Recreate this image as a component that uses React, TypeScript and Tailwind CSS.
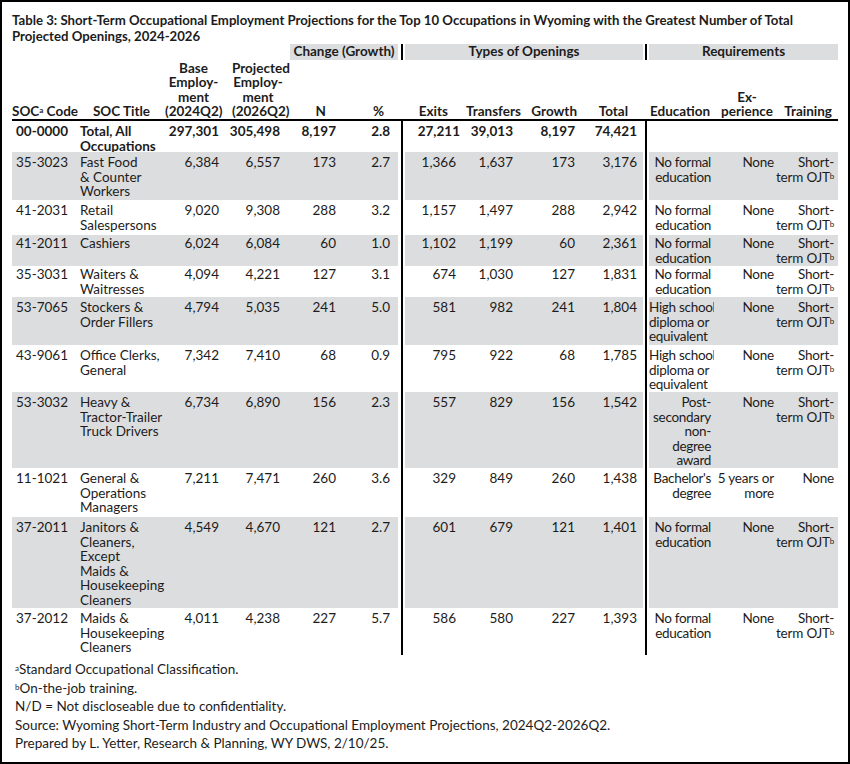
const GRID =
  "grid grid-cols-[66px_87px_57px_62px_56px_58px_7px_55px_57px_62px_64px_6px_65px_62px_62px]";

interface Row {
  code: string;
  title: string[];
  base: string;
  proj: string;
  n: string;
  pct: string;
  exits: string;
  transfers: string;
  growth: string;
  total: string;
  edu: string[];
  eduLeft?: boolean;
  exp: string[];
  ojt: boolean;
  h: string;
  pt?: string;
  gray: boolean;
}

const ROWS: Row[] = [
  {
    code: "35-3023",
    title: ["Fast Food", "& Counter", "Workers"],
    base: "6,384",
    proj: "6,557",
    n: "173",
    pct: "2.7",
    exits: "1,366",
    transfers: "1,637",
    growth: "173",
    total: "3,176",
    edu: ["No formal", "education"],
    exp: ["None"],
    ojt: true,
    h: "h-[48px]",
    gray: true,
  },
  {
    code: "41-2031",
    title: ["Retail", "Salespersons"],
    base: "9,020",
    proj: "9,308",
    n: "288",
    pct: "3.2",
    exits: "1,157",
    transfers: "1,497",
    growth: "288",
    total: "2,942",
    edu: ["No formal", "education"],
    exp: ["None"],
    ojt: true,
    h: "h-[35px]",
    gray: false,
  },
  {
    code: "41-2011",
    title: ["Cashiers"],
    base: "6,024",
    proj: "6,084",
    n: "60",
    pct: "1.0",
    exits: "1,102",
    transfers: "1,199",
    growth: "60",
    total: "2,361",
    edu: ["No formal", "education"],
    exp: ["None"],
    ojt: true,
    h: "h-[31px]",
    pt: "pt-[1px]",
    gray: true,
  },
  {
    code: "35-3031",
    title: ["Waiters &", "Waitresses"],
    base: "4,094",
    proj: "4,221",
    n: "127",
    pct: "3.1",
    exits: "674",
    transfers: "1,030",
    growth: "127",
    total: "1,831",
    edu: ["No formal", "education"],
    exp: ["None"],
    ojt: true,
    h: "h-[31px]",
    pt: "pt-[1px]",
    gray: false,
  },
  {
    code: "53-7065",
    title: ["Stockers &", "Order Fillers"],
    base: "4,794",
    proj: "5,035",
    n: "241",
    pct: "5.0",
    exits: "581",
    transfers: "982",
    growth: "241",
    total: "1,804",
    edu: ["High school", "diploma or", "equivalent"],
    eduLeft: true,
    exp: ["None"],
    ojt: true,
    h: "h-[48px]",
    gray: true,
  },
  {
    code: "43-9061",
    title: ["Office Clerks,", "General"],
    base: "7,342",
    proj: "7,410",
    n: "68",
    pct: "0.9",
    exits: "795",
    transfers: "922",
    growth: "68",
    total: "1,785",
    edu: ["High school", "diploma or", "equivalent"],
    eduLeft: true,
    exp: ["None"],
    ojt: true,
    h: "h-[47px]",
    gray: false,
  },
  {
    code: "53-3032",
    title: ["Heavy &", "Tractor-Trailer", "Truck Drivers"],
    base: "6,734",
    proj: "6,890",
    n: "156",
    pct: "2.3",
    exits: "557",
    transfers: "829",
    growth: "156",
    total: "1,542",
    edu: ["Post-", "secondary", "non-", "degree", "award"],
    exp: ["None"],
    ojt: true,
    h: "h-[76px]",
    gray: true,
  },
  {
    code: "11-1021",
    title: ["General &", "Operations", "Managers"],
    base: "7,211",
    proj: "7,471",
    n: "260",
    pct: "3.6",
    exits: "329",
    transfers: "849",
    growth: "260",
    total: "1,438",
    edu: ["Bachelor's", "degree"],
    exp: ["5 years or", "more"],
    ojt: false,
    h: "h-[49px]",
    gray: false,
  },
  {
    code: "37-2011",
    title: ["Janitors &", "Cleaners,", "Except", "Maids &", "Housekeeping", "Cleaners"],
    base: "4,549",
    proj: "4,670",
    n: "121",
    pct: "2.7",
    exits: "601",
    transfers: "679",
    growth: "121",
    total: "1,401",
    edu: ["No formal", "education"],
    exp: ["None"],
    ojt: true,
    h: "h-[91px]",
    gray: true,
  },
  {
    code: "37-2012",
    title: ["Maids &", "Housekeeping", "Cleaners"],
    base: "4,011",
    proj: "4,238",
    n: "227",
    pct: "5.7",
    exits: "586",
    transfers: "580",
    growth: "227",
    total: "1,393",
    edu: ["No formal", "education"],
    exp: ["None"],
    ojt: true,
    h: "h-[47px]",
    gray: false,
  },
];

function Sep() {
  return (
    <div className="flex justify-center">
      <div className="w-[2px] bg-black" />
    </div>
  );
}

function Lines({ lines }: { lines: string[] }) {
  return (
    <>
      {lines.map((line) => (
        <div key={line}>{line}</div>
      ))}
    </>
  );
}

function DataRow({ row }: { row: Row }) {
  const bg = row.gray ? "bg-[#dcdddf]" : "bg-white";
  const cell = `${bg} ${row.pt ?? "pt-[3px]"}`;
  return (
    <div className={`${GRID} ${row.h}`}>
      <div className={`${cell} pl-[4px]`}>{row.code}</div>
      <div className={`${cell} pl-[2px] whitespace-nowrap`}>
        <Lines lines={row.title} />
      </div>
      <div className={`${cell} pr-[3px] text-right`}>{row.base}</div>
      <div className={`${cell} pr-[4px] text-right`}>{row.proj}</div>
      <div className={`${cell} pr-[4px] text-right`}>{row.n}</div>
      <div className={`${cell} pr-[8px] text-right`}>{row.pct}</div>
      <Sep />
      <div className={`${cell} pr-[4px] text-right`}>{row.exits}</div>
      <div className={`${cell} pr-[4px] text-right`}>{row.transfers}</div>
      <div className={`${cell} pr-[4px] text-right`}>{row.growth}</div>
      <div className={`${cell} pr-[6px] text-right`}>{row.total}</div>
      <Sep />
      <div
        className={`${cell} whitespace-nowrap tracking-[-0.3px] ${row.eduLeft ? "text-left" : "pr-[3px] text-right"}`}
      >
        <Lines lines={row.edu} />
      </div>
      <div className={`${cell} pr-[2px] text-right whitespace-nowrap tracking-[-0.2px]`}>
        <Lines lines={row.exp} />
      </div>
      <div className={`${cell} pr-[4px] text-right whitespace-nowrap tracking-[-0.2px]`}>
        {row.ojt ? (
          <>
            <div>Short-</div>
            <div>
              term OJT<sup className="top-[-3px] text-[8px]">b</sup>
            </div>
          </>
        ) : (
          <div>None</div>
        )}
      </div>
    </div>
  );
}

export default function App() {
  return (
    <div className="h-[764px] w-[850px] border-2 border-black bg-white pl-[10px] pt-[10px] font-['Lato','Liberation_Sans',sans-serif] text-[13.5px] leading-[14.6px] text-[#1c1c1c]">
      <h1 className="whitespace-nowrap text-[13.2px] font-bold leading-[16px]">
        Table 3: Short-Term Occupational Employment Projections for the Top 10 Occupations in Wyoming with the Greatest Number of Total
        <br />
        Projected Openings, 2024-2026
      </h1>

      <div className="w-[826px]">
        <div className={`${GRID} h-[16px] font-bold leading-[15px]`}>
          <div className="col-span-4" />
          <div className="col-span-2 ml-[6px] bg-[#dcdddf] text-center">Change (Growth)</div>
          <Sep />
          <div className="col-span-4 bg-[#dcdddf] text-center">Types of Openings</div>
          <Sep />
          <div className="col-span-3 bg-[#dcdddf] text-center">Requirements</div>
        </div>

        <div className={`${GRID} h-[59px] items-end font-bold`}>
          <div className="whitespace-nowrap">
            SOC<sup className="top-[-3px] text-[8px]">a</sup> Code
          </div>
          <div className="text-center">SOC Title</div>
          <div className="whitespace-nowrap text-center">
            <div>Base</div>
            <div>Employ-</div>
            <div>ment</div>
            <div>(2024Q2)</div>
          </div>
          <div className="whitespace-nowrap pl-[10px] text-center">
            <div>Projected</div>
            <div>Employ-</div>
            <div>ment</div>
            <div>(2026Q2)</div>
          </div>
          <div className="pr-[14px] text-right">N</div>
          <div className="pr-[14px] text-right">%</div>
          <Sep />
          <div className="pr-[12px] text-right">Exits</div>
          <div className="whitespace-nowrap pl-[6px] text-left">Transfers</div>
          <div className="pr-[2px] text-right">Growth</div>
          <div className="pr-[15px] text-right">Total</div>
          <Sep />
          <div className="whitespace-nowrap pl-[1px]">Education</div>
          <div className="whitespace-nowrap pl-[4px] text-center">
            <div>Ex-</div>
            <div>perience</div>
          </div>
          <div className="pr-[6px] text-right">Training</div>
        </div>

        <div className="h-[2px] bg-black" />

        <div className={`${GRID} h-[31px] font-bold`}>
          <div className="pl-[4px] pt-[3px]">00-0000</div>
          <div className="pl-[2px] pt-[3px]">
            <div>Total, All</div>
            <div>Occupations</div>
          </div>
          <div className="pr-[3px] pt-[3px] text-right">297,301</div>
          <div className="pr-[4px] pt-[3px] text-right">305,498</div>
          <div className="pr-[4px] pt-[3px] text-right">8,197</div>
          <div className="pr-[8px] pt-[3px] text-right">2.8</div>
          <Sep />
          <div className="pt-[3px] text-right">27,211</div>
          <div className="pr-[4px] pt-[3px] text-right">39,013</div>
          <div className="pr-[4px] pt-[3px] text-right">8,197</div>
          <div className="pr-[6px] pt-[3px] text-right">74,421</div>
          <Sep />
          <div />
          <div />
          <div />
        </div>

        {ROWS.map((row) => (
          <DataRow key={row.code} row={row} />
        ))}
      </div>

      <div className="mt-[5px] pl-[3px] leading-[18.5px]">
        <div>
          <sup className="top-[-3px] text-[8px]">a</sup>Standard Occupational Classification.
        </div>
        <div>
          <sup className="top-[-3px] text-[8px]">b</sup>On-the-job training.
        </div>
        <div>N/D = Not discloseable due to confidentiality.</div>
        <div>Source: Wyoming Short-Term Industry and Occupational Employment Projections, 2024Q2-2026Q2.</div>
        <div>Prepared by L. Yetter, Research &amp; Planning, WY DWS, 2/10/25.</div>
      </div>
    </div>
  );
}
